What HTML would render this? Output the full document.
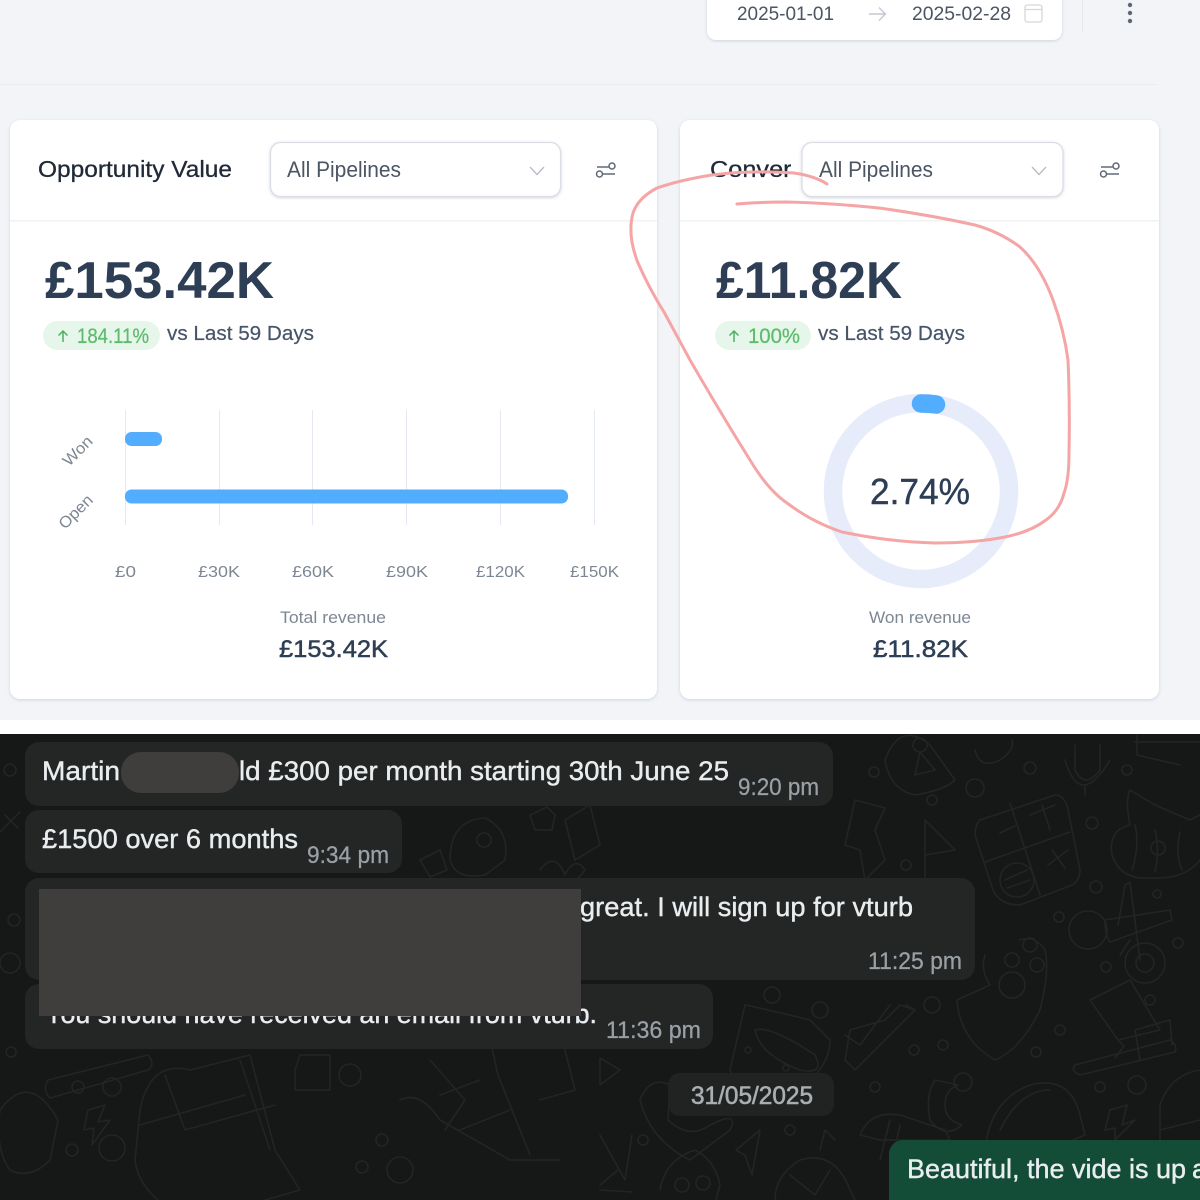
<!DOCTYPE html>
<html><head><meta charset="utf-8"><title>Dashboard and chat</title>
<style>
html,body{margin:0;padding:0;background:#fff}
svg{display:block}
#r{filter:blur(.35px)}
text{font-family:"Liberation Sans",sans-serif}
.d{fill:none;stroke:#232525;stroke-width:1.6;stroke-linecap:round;stroke-linejoin:round}
.m{fill:#e9edef;stroke:#e9edef;stroke-width:.4;font-size:27px}
.t{fill:#9aa1a6;stroke:#9aa1a6;stroke-width:.25;font-size:24px}
.ax{fill:#7d8793;font-size:16px}
</style></head><body>
<svg id="r" xmlns="http://www.w3.org/2000/svg" width="1200" height="1200" viewBox="0 0 1200 1200">
<defs>
<filter id="s" x="-5%" y="-5%" width="110%" height="110%"><feDropShadow dx="0" dy="1" stdDeviation="1.5" flood-color="#aab2c0" flood-opacity=".5"/></filter>
</defs>
<rect width="1200" height="720" fill="#f2f4f8"/>
<rect y="720" width="1200" height="14" fill="#fff"/>
<rect y="84" width="1157" height="1" fill="#e9ecf1"/>
<rect x="1082" y="0" width="1" height="32" fill="#e6e9ee"/>

<!-- date box -->
<rect x="707" y="-20" width="355" height="60" rx="9" fill="#fff" filter="url(#s)"/>
<text x="737" y="20" font-size="19" fill="#4b5563" textLength="97" lengthAdjust="spacingAndGlyphs">2025-01-01</text>
<path d="M869 14H885M879 7.500L885.500 14L879 20.500" fill="none" stroke="#c3c8d0" stroke-width="1.400"/>
<text x="912" y="20" font-size="19" fill="#4b5563" textLength="99" lengthAdjust="spacingAndGlyphs">2025-02-28</text>
<rect x="1025" y="5" width="17" height="17" rx="2.500" fill="none" stroke="#d3d7dd" stroke-width="1.300"/>
<path d="M1025 9.500H1042" stroke="#d3d7dd" stroke-width="1.300"/>
<circle cx="1130" cy="5" r="2.200" fill="#5d6776"/><circle cx="1130" cy="13" r="2.200" fill="#5d6776"/><circle cx="1130" cy="21" r="2.200" fill="#5d6776"/>

<!-- card 1 -->
<rect x="10" y="120" width="647" height="579" rx="10" fill="#fff" filter="url(#s)"/>
<rect x="10" y="220" width="647" height="1.500" fill="#f0f2f6"/>
<text x="38" y="177" font-size="23" fill="#1f2937" stroke="#1f2937" stroke-width=".3" textLength="194" lengthAdjust="spacingAndGlyphs">Opportunity Value</text>
<rect x="270.500" y="142.500" width="290" height="54" rx="10" fill="#fff" stroke="#dadde4" stroke-width="1.200" filter="url(#s)"/>
<text x="287" y="177" font-size="22" fill="#4b5563" textLength="114" lengthAdjust="spacingAndGlyphs">All Pipelines</text>
<path d="M530 167L537 174.500L544 167" fill="none" stroke="#b6bcc5" stroke-width="1.300"/>
<g fill="none" stroke="#5f6b7a" stroke-width="1.500"><path d="M597 167H608.500M602 174H615"/><circle cx="612" cy="166" r="3"/><circle cx="599.500" cy="174" r="3"/></g>
<text x="45" y="298" font-size="52" font-weight="bold" fill="#2d3e55" textLength="229" lengthAdjust="spacingAndGlyphs">£153.42K</text>
<rect x="43" y="321" width="117" height="29" rx="14.500" fill="#e7f6ea"/>
<path d="M63 342V331M58.500 335.500L63 331L67.500 335.500" fill="none" stroke="#4caf64" stroke-width="1.500"/>
<text x="77" y="343" font-size="21" fill="#5dbb6c" stroke="#5dbb6c" stroke-width=".25" textLength="72" lengthAdjust="spacingAndGlyphs">184.11%</text>
<text x="167" y="340" font-size="20" fill="#475569" stroke="#475569" stroke-width=".2" textLength="147" lengthAdjust="spacingAndGlyphs">vs Last 59 Days</text>

<g fill="#e3e8f1">
<rect x="125" y="410" width="1" height="115"/><rect x="219" y="410" width="1" height="115"/><rect x="312" y="410" width="1" height="115"/><rect x="406" y="410" width="1" height="115"/><rect x="500" y="410" width="1" height="115"/><rect x="594" y="410" width="1" height="115"/>
</g>
<rect x="125" y="432" width="37" height="14" rx="6.500" fill="#52adff"/>
<rect x="125" y="489.500" width="443" height="14" rx="6.500" fill="#52adff"/>
<text transform="translate(69 467) rotate(-45)" font-size="16" fill="#7d8793" textLength="35" lengthAdjust="spacingAndGlyphs">Won</text>
<text transform="translate(65 530) rotate(-45)" font-size="16" fill="#7d8793" textLength="41" lengthAdjust="spacingAndGlyphs">Open</text>
<text class="ax" x="115" y="577" textLength="21" lengthAdjust="spacingAndGlyphs">£0</text><text class="ax" x="198" y="577" textLength="42" lengthAdjust="spacingAndGlyphs">£30K</text><text class="ax" x="292" y="577" textLength="42" lengthAdjust="spacingAndGlyphs">£60K</text><text class="ax" x="386" y="577" textLength="42" lengthAdjust="spacingAndGlyphs">£90K</text><text class="ax" x="476" y="577" textLength="49" lengthAdjust="spacingAndGlyphs">£120K</text><text class="ax" x="570" y="577" textLength="49" lengthAdjust="spacingAndGlyphs">£150K</text>
<text x="280" y="623" font-size="17" fill="#7d8793" textLength="106" lengthAdjust="spacingAndGlyphs">Total revenue</text>
<text x="279" y="657" font-size="24" fill="#2d3e55" stroke="#2d3e55" stroke-width=".5" textLength="109" lengthAdjust="spacingAndGlyphs">£153.42K</text>

<!-- card 2 -->
<rect x="680" y="120" width="479" height="579" rx="10" fill="#fff" filter="url(#s)"/>
<rect x="680" y="220" width="479" height="1.500" fill="#f0f2f6"/>
<svg x="700" y="150" width="91" height="40" viewBox="700 150 91 40"><text x="710" y="177" font-size="23" fill="#1f2937" stroke="#1f2937" stroke-width=".3" textLength="128" lengthAdjust="spacingAndGlyphs">Conversion</text></svg>
<rect x="802" y="142.500" width="261" height="54" rx="10" fill="#fff" stroke="#dadde4" stroke-width="1.200" filter="url(#s)"/>
<text x="819" y="177" font-size="22" fill="#4b5563" textLength="114" lengthAdjust="spacingAndGlyphs">All Pipelines</text>
<path d="M1032 167L1039 174.500L1046 167" fill="none" stroke="#b6bcc5" stroke-width="1.300"/>
<g fill="none" stroke="#5f6b7a" stroke-width="1.500"><path d="M1101 167H1112.500M1106 174H1119"/><circle cx="1116" cy="166" r="3"/><circle cx="1103.500" cy="174" r="3"/></g>
<text x="716" y="298" font-size="52" font-weight="bold" fill="#2d3e55" textLength="186" lengthAdjust="spacingAndGlyphs">£11.82K</text>
<rect x="715" y="321" width="96" height="29" rx="14.500" fill="#e7f6ea"/>
<path d="M734 342V331M729.500 335.500L734 331L738.500 335.500" fill="none" stroke="#4caf64" stroke-width="1.500"/>
<text x="748" y="343" font-size="21" fill="#5dbb6c" stroke="#5dbb6c" stroke-width=".25" textLength="52" lengthAdjust="spacingAndGlyphs">100%</text>
<text x="818" y="340" font-size="20" fill="#475569" stroke="#475569" stroke-width=".2" textLength="147" lengthAdjust="spacingAndGlyphs">vs Last 59 Days</text>
<circle cx="921" cy="491" r="88" fill="none" stroke="#e6ecfa" stroke-width="18.500"/>
<path d="M921 403.500Q929 403.500 936 404.500" fill="none" stroke="#52adff" stroke-width="18.500" stroke-linecap="round"/>
<text x="870" y="504" font-size="36" fill="#2d3e55" stroke="#2d3e55" stroke-width=".4" textLength="100" lengthAdjust="spacingAndGlyphs">2.74%</text>
<text x="869" y="623" font-size="17" fill="#7d8793" textLength="102" lengthAdjust="spacingAndGlyphs">Won revenue</text>
<text x="873" y="657" font-size="24" fill="#2d3e55" stroke="#2d3e55" stroke-width=".5" textLength="95" lengthAdjust="spacingAndGlyphs">£11.82K</text>

<!-- chat -->
<rect y="734" width="1200" height="466" fill="#161717"/>
<g class="d">
<circle cx="10" cy="770" r="6"/><path d="M0 832L20 812M5 815L18 828"/><circle cx="14" cy="920" r="6"/><circle cx="10" cy="963" r="10"/><circle cx="11" cy="1052" r="5"/>
<path d="M48 1080L148 1055Q156 1065 148 1070L50 1098Q42 1090 48 1080Z"/><path d="M0 1110Q30 1070 58 1120L50 1160Q30 1180 10 1170Q-5 1150 0 1110Z"/><circle cx="78" cy="1087" r="6"/><circle cx="112" cy="1087" r="9"/>
<path d="M88 1110L105 1105L98 1122L110 1120L92 1145L94 1128L84 1130Z"/>
<path d="M140 1110Q150 1060 190 1070L250 1055L275 1150L300 1190L195 1220Q140 1200 135 1160Z"/>
<path d="M165 1075L185 1130L275 1105M240 1060L270 1150M140 1125L245 1095"/><circle cx="72" cy="1150" r="6"/><circle cx="112" cy="1148" r="13"/>
<circle cx="350" cy="1075" r="11"/><circle cx="382" cy="1140" r="6"/><circle cx="362" cy="1167" r="6"/><circle cx="400" cy="1170" r="13"/>
<path d="M295 1070V1090H330V1055H300ZM400 1100Q420 1090 440 1120L510 1160L560 1160"/><path d="M430 1060L465 1100L445 1130M440 1095L480 1080M460 1130L510 1110"/>
<path d="M480 1000Q470 1015 488 1030L498 1075L530 1155M530 1040L560 1030L575 1090L540 1100"/>
<path d="M450 860Q450 820 485 818Q510 830 505 860L485 875Q455 880 450 860Z"/><circle cx="484" cy="840" r="7"/><path d="M530 815L547 807L555 815L552 830L535 830Z"/>
<path d="M420 860L440 850L447 870L430 877Z"/><path d="M565 820L590 805L600 845L575 860Z"/><path d="M540 870Q555 850 565 875Q575 855 585 870Q570 890 560 880"/>
<path d="M855 800L885 808L875 830L885 860L865 880L860 850L845 845Z"/><path d="M925 820L955 850L925 855L925 880Z"/><circle cx="906" cy="865" r="5"/><circle cx="874" cy="772" r="5"/><circle cx="975" cy="788" r="9"/><circle cx="932" cy="800" r="5"/>
<path d="M885 760Q900 720 930 745L955 780Q945 790 915 795Q890 790 885 760Z"/><circle cx="920" cy="745" r="7"/><path d="M920 752L915 775L935 770Z"/>
<path d="M975 750Q980 770 1000 760Q1015 750 1012 740"/><path d="M1075 745V770Q1085 790 1100 770V745M1065 760Q1080 810 1110 760M1085 785V795"/><circle cx="1030" cy="768" r="6"/><circle cx="1127" cy="770" r="5"/><path d="M1135 742H1200M1137 735V755L1180 765"/>
<path d="M980 820L1055 795Q1065 795 1068 810L1080 870Q1080 880 1072 885L1020 905Q1000 905 993 890L975 835Q975 825 980 820Z"/><path d="M1010 803L1040 895M985 862L1070 832M1000 833L1015 826M1030 815L1055 805M1042 805L1050 830M1048 865L1068 850M1052 850L1065 868M1005 880L1027 870M1007 888L1030 880"/><circle cx="1017" cy="880" r="17"/>
<path d="M1130 825Q1125 800 1130 790L1155 805L1190 820L1200 815M1112 855Q1108 830 1130 825M1112 855Q1120 880 1150 878Q1185 880 1200 860"/><path d="M1135 825Q1140 845 1132 870M1155 830Q1160 850 1155 872M1180 832Q1175 855 1182 870"/><circle cx="1158" cy="848" r="7"/><circle cx="1092" cy="823" r="6"/>
<circle cx="1088" cy="930" r="19"/><circle cx="1145" cy="963" r="20"/><circle cx="1145" cy="963" r="9"/><path d="M1105 920L1170 910L1172 920L1110 942Q1105 935 1105 920ZM1125 885L1130 882L1140 960M1125 885L1118 925M1130 940L1120 955"/><circle cx="1096" cy="887" r="6"/><circle cx="1157" cy="894" r="4"/><circle cx="1178" cy="943" r="5"/><circle cx="1059" cy="917" r="5"/><circle cx="1106" cy="967" r="5"/>
<path d="M985 955Q980 970 990 985L957 1000Q960 1040 995 1060Q1020 1050 1040 1010Q1050 970 1045 950Q1035 935 1020 940"/><circle cx="1012" cy="960" r="7"/><circle cx="1030" cy="945" r="7"/><circle cx="1037" cy="965" r="7"/><circle cx="1012" cy="985" r="13"/>
<path d="M1090 1000L1130 980L1160 1030L1118 1040ZM1118 1040L1124 1046L1115 1058"/><path d="M1140 1060L1135 1030L1170 1020L1172 1045M1075 1065L1170 1040Q1178 1045 1175 1052L1080 1075Q1070 1070 1075 1065Z"/>
<circle cx="1060" cy="1030" r="5"/><circle cx="1150" cy="1000" r="5"/><circle cx="1036" cy="1052" r="5"/>
<path d="M850 1030L885 1020L900 1005L915 1010L855 1070L845 1060ZM915 1010L906 1005M890 1005L860 1045L845 1035"/><circle cx="772" cy="995" r="8"/><circle cx="820" cy="1010" r="8"/><circle cx="932" cy="1005" r="8"/><circle cx="914" cy="1050" r="5"/><circle cx="943" cy="1045" r="5"/>
<path d="M745 1005Q770 1010 810 1020L830 1040Q830 1075 780 1100L745 1110L730 1070ZM755 1030Q770 1025 815 1055Q825 1075 800 1070Q760 1055 755 1030Z"/><circle cx="748" cy="1050" r="3"/><circle cx="786" cy="1068" r="3"/>
<path d="M935 1080Q925 1095 930 1120Q945 1140 962 1125Q945 1120 945 1105Q945 1090 958 1085Z"/><circle cx="963" cy="1082" r="9"/><circle cx="875" cy="1087" r="5"/>
<path d="M985 1150Q990 1100 1030 1085Q1070 1075 1080 1115L1085 1135L1050 1150L1000 1155Z"/><path d="M1000 1130Q1020 1090 1050 1090"/><circle cx="1100" cy="1087" r="5"/><circle cx="1137" cy="1085" r="9"/>
<path d="M1110 1110L1127 1105L1122 1125L1135 1120L1115 1140L1115 1128L1105 1130Z"/><path d="M1160 1105Q1170 1075 1200 1070M1160 1105V1165M1160 1130L1200 1120"/>
<path d="M860 1135Q870 1110 900 1115L945 1130L950 1140L880 1140ZM890 1120L880 1160M900 1125L890 1170"/>
<path d="M640 1100Q650 1075 670 1085L668 1120Q690 1140 710 1125Q740 1110 730 1130L690 1160Q650 1140 640 1100Z"/>
<path d="M600 1058L620 1070L600 1085ZM600 1185L618 1170M600 1135L625 1180L632 1135M600 1190L632 1192"/><circle cx="643" cy="1140" r="5"/><circle cx="790" cy="1130" r="5"/>
<path d="M736 1150L760 1130L752 1175L745 1155Z"/>
<path d="M660 1190Q665 1160 695 1150Q715 1160 720 1185L716 1200"/><circle cx="682" cy="1185" r="7"/><circle cx="703" cy="1183" r="7"/>
<path d="M775 1200Q775 1175 800 1160Q835 1150 850 1190L855 1200M820 1150L825 1130L835 1140M790 1175L815 1195M830 1170L815 1195"/>
</g>

<rect x="25" y="742" width="808" height="64" rx="14" fill="#242626"/>
<rect x="25" y="810" width="377" height="63" rx="14" fill="#242626"/>
<rect x="25" y="878" width="950" height="102" rx="14" fill="#242626"/>
<rect x="25" y="984" width="688" height="65" rx="14" fill="#242626"/>
<rect x="668" y="1073" width="166" height="43" rx="12" fill="#212323"/>
<rect x="889" y="1140" width="340" height="90" rx="14" fill="#144d37"/>

<text class="m" x="42" y="780" textLength="78" lengthAdjust="spacingAndGlyphs">Martin</text>
<text class="m" x="239" y="780" textLength="490" lengthAdjust="spacingAndGlyphs">ld £300 per month starting 30th June 25</text>
<text class="t" x="738" y="795" textLength="81" lengthAdjust="spacingAndGlyphs">9:20 pm</text>
<text class="m" x="42" y="848" textLength="256" lengthAdjust="spacingAndGlyphs">£1500 over 6 months</text>
<text class="t" x="307" y="863" textLength="82" lengthAdjust="spacingAndGlyphs">9:34 pm</text>
<text class="m" x="580" y="916" textLength="333" lengthAdjust="spacingAndGlyphs">great. I will sign up for vturb</text>
<text class="t" x="868" y="969" textLength="94" lengthAdjust="spacingAndGlyphs">11:25 pm</text>
<text class="m" x="45" y="1023" textLength="552" lengthAdjust="spacingAndGlyphs">You should have received an email from vturb.</text>
<text class="t" x="606" y="1038" textLength="95" lengthAdjust="spacingAndGlyphs">11:36 pm</text>
<text x="691" y="1104" font-size="25" fill="#a9aeb1" stroke="#a9aeb1" stroke-width=".6" textLength="122" lengthAdjust="spacingAndGlyphs">31/05/2025</text>
<text class="m" x="907" y="1178" textLength="279" lengthAdjust="spacingAndGlyphs">Beautiful, the vide is up</text>
<text class="m" x="1192" y="1178">a</text>

<rect x="121" y="752" width="118" height="41" rx="20" fill="#3f3e3d"/>
<rect x="39" y="889" width="542" height="127" fill="#3f3e3d"/>

<path d="M827 184Q815 176 794 173Q750 170 712 175Q680 180 657 188Q638 198 633 213Q627 235 638 263Q650 290 664 312Q677 336 690 360Q720 412 750 460Q768 490 787 503Q812 522 842 532Q890 542 935 543Q975 543 1005 537Q1030 532 1046 520Q1060 510 1064 493Q1069 480 1069 453Q1070 405 1068 360Q1064 330 1053 300Q1040 265 1020 247Q1000 232 975 225Q930 215 879 208Q830 203 787 202Q760 202 737 204" fill="none" stroke="#f5a5a5" stroke-width="3" stroke-linecap="round" stroke-linejoin="round"/>
</svg>
</body></html>
